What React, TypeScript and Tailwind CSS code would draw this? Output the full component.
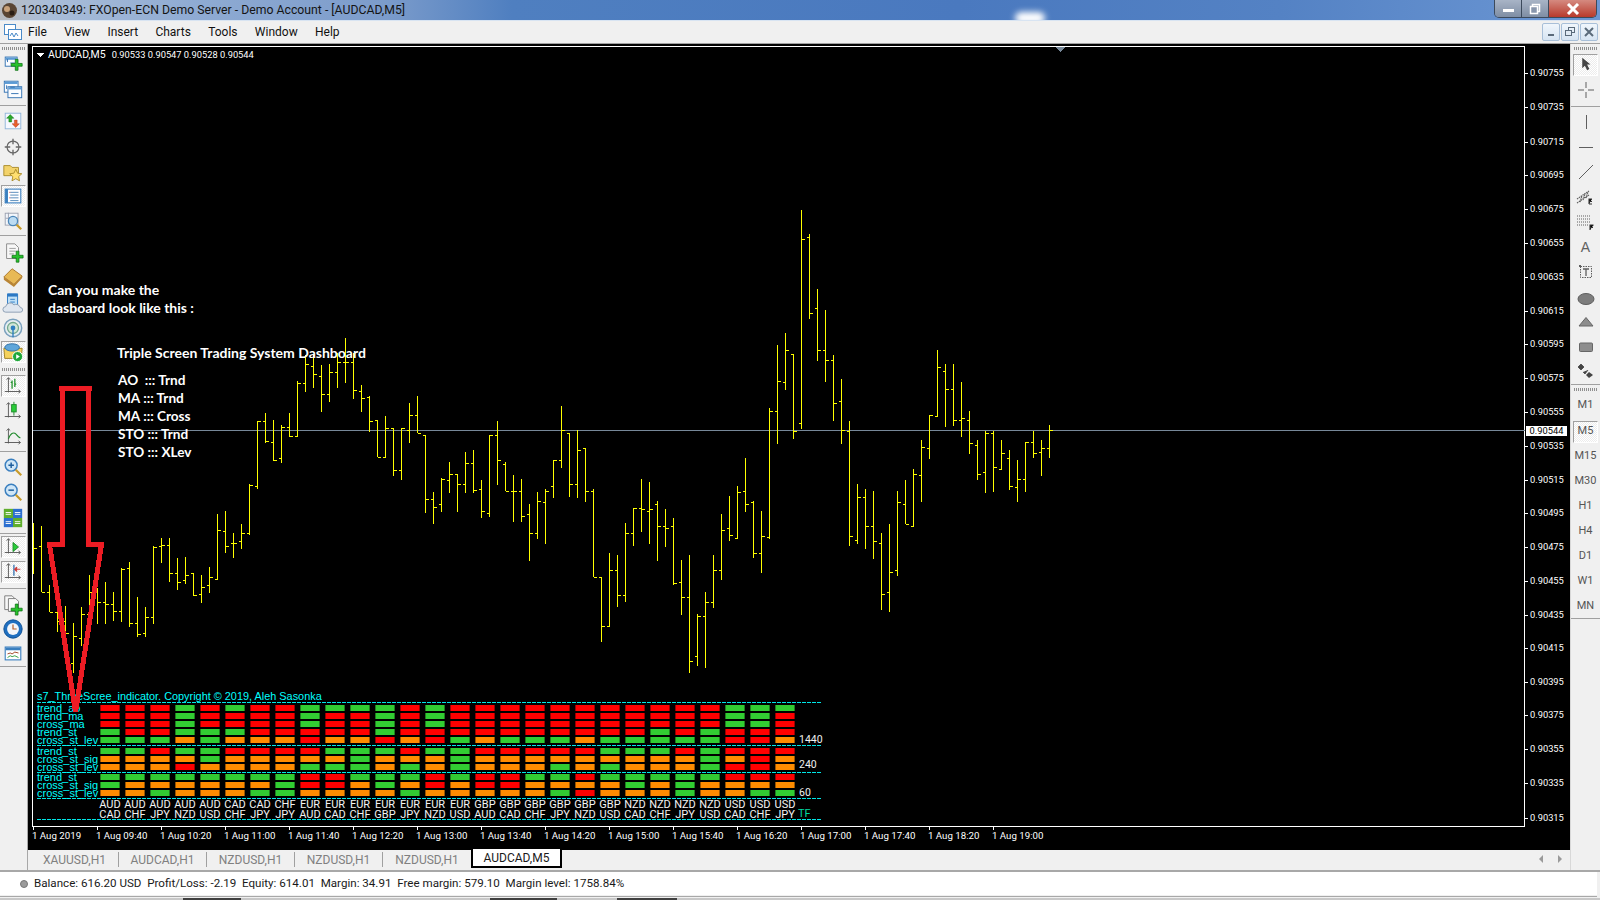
import React from "react";

type B = [number, number, number, number];
// high, low, open, close taken from the picture
const z3: B[] = [[130,282,205,205],[138,337,199,337],[316,397,337,397],[397,455,397,423],[378,470,423,460],[430,578,550,468],[381,497,475,403],[285,420,403,337],[325,433,337,367],[306,433,367,373],[336,424,373,394],[265,425,394,268],[247,440,265,430],[352,470,430,463],[381,470,460,412],[199,431,412,202],[175,248,199,196],[175,307,196,280],[235,329,280,307],[232,313,301,286],[280,347,280,344],[285,368,343,322],[262,338,316,292],[103,300,298,151],[94,218,154,199],[159,233,190,190],[132,206,184,160],[13,166,160,16]];
const z9: B[] = [[363,568,558,363],[340,430,363,424],[360,482,427,480],[376,488,473,380],[340,410,380,408],[243,410,408,248],[165,275,248,193],[165,263,197,222],[195,335,228,283],[193,305,283,217],[160,263,217,187],[113,248,187,185],[160,296,185,270],[255,335,272,295],[288,395,290,363],[360,472,360,472],[348,472,472,385],[385,527,385,510],[385,539,510,385],[310,428,390,345],[288,400,345,398],[406,640,406,598],[576,673,598,620],[533,635,613,537],[486,578,540,521],[521,635,521,552],[456,578,552,488],[450,578,488,570],[540,655,568,633],[406,650,640,406],[363,554,406,481]];
const z10: B[] = [[786,874,793,874],[825,965,874,874],[837,965,874,949],[912,1082,943,1000],[876,1016,1000,904],[867,1031,907,874],[781,893,859,781],[618,803,781,691],[700,890,700,853],[691,893,853,751],[745,905,745,874],[868,1132,874,1132],[1132,1325,1132,1279],[1059,1279,1279,1111],[1065,1220,1111,1186],[969,1205,1186,1000],[925,1037,1000,925],[837,995,925,928],[846,1031,934,928],[903,1082,913,979],[927,1040,979,985],[954,1154,979,1148],[1080,1244,1147,1192],[1065,1418,1192,1384],[1242,1397,1369,1249],[1176,1403,1249,1207],[1065,1223,1205,1111],[942,1139,1111,991],[888,1022,985,1006],[858,1016,1015,877],[774,935,874,913],[904,1073,907,1060],[933,1118,1060,1009],[625,1016,1010,634],[435,731,634,544],[399,569,547,451],[463,716,463,694],[30,686,670,118],[102,356,112,340],[267,482,325,451],[330,545,451,481],[465,662,481,610],[537,731,604,691],[663,1037,694,1009],[852,1031,1021,892],[867,1046,892,979],[873,1076,979,1024],[999,1229,1030,1183],[972,1235,1177,1117],[873,1127,1111,907],[840,973,913,973],[807,979,979,823],[720,905,826,742],[646,776,745,646],[450,649,649,502],[492,680,514,568],[492,677,568,661],[546,710,661,655],[633,761,661,730],[720,839,736,823],[693,878,817,700],[693,875,700,802],[720,808,808,760],[750,869,775,859],[780,905,862,838],[727,875,838,727],[693,773,727,760],[720,827,757,745],[675,773,745,691]];

const bars: B[] = [
  ...z3.map((b) => b.map((v) => 480 + v / 3) as B),
  ...z9.map((b) => b.map((v) => 300 + v / 3) as B),
  ...z10.map((b) => b.map((v) => 200 + v / 3) as B),
];

const barPath = bars
  .map(([h, l, o, c], k) => {
    const x = 33 + 8 * k + 0.5;
    const oy = Math.round(o) + 0.5;
    const cy = Math.round(c) + 0.5;
    return `M${x} ${Math.round(h)}V${Math.round(l)}${k > 0 ? `M${x - 3} ${oy}H${x}` : ""}M${x} ${cy}H${x + 3}`;
  })
  .join("");

const prices: [string, number][] = [
  ["0.90755", 73], ["0.90735", 107], ["0.90715", 142], ["0.90695", 175], ["0.90675", 209], ["0.90655", 243],
  ["0.90635", 277], ["0.90615", 311], ["0.90595", 344], ["0.90575", 378], ["0.90555", 412], ["0.90535", 446],
  ["0.90515", 480], ["0.90495", 513], ["0.90475", 547], ["0.90455", 581], ["0.90435", 615], ["0.90415", 648],
  ["0.90395", 682], ["0.90375", 715], ["0.90355", 749], ["0.90335", 783], ["0.90315", 818],
];
const times = ["1 Aug 2019", "1 Aug 09:40", "1 Aug 10:20", "1 Aug 11:00", "1 Aug 11:40", "1 Aug 12:20", "1 Aug 13:00", "1 Aug 13:40", "1 Aug 14:20", "1 Aug 15:00", "1 Aug 15:40", "1 Aug 16:20", "1 Aug 17:00", "1 Aug 17:40", "1 Aug 18:20", "1 Aug 19:00"];

const pairs = ["AUD CAD", "AUD CHF", "AUD JPY", "AUD NZD", "AUD USD", "CAD CHF", "CAD JPY", "CHF JPY", "EUR AUD", "EUR CAD", "EUR CHF", "EUR GBP", "EUR JPY", "EUR NZD", "EUR USD", "GBP AUD", "GBP CAD", "GBP CHF", "GBP JPY", "GBP NZD", "GBP USD", "NZD CAD", "NZD CHF", "NZD JPY", "NZD USD", "USD CAD", "USD CHF", "USD JPY"];

const cellClass: Record<string, string> = {
  R: "bg-[#ff0000] border-x border-[#990000]",
  G: "bg-[#32cd32] border-x border-[#1f7f1f]",
  O: "bg-[#ff8c00] border-x border-[#995400]",
};

const blocks: { top: string; rows: [string, string][]; tf: string; tfc: string }[] = [
  {
    top: "pt-[2px]",
    tf: "1440",
    tfc: "leading-[6px]",
    rows: [
      ["trend_ao", "RRRGRGRRGGGGRGRRRRRRRRRRRGGG"],
      ["trend_ma", "RRRGRRRRGRRGRGRRRRRRRRRRRGGR"],
      ["cross_ma", "RRRGRRRRGRRGRGRRRRRRRRRRRGGR"],
      ["trend_st", "GRRGGGRRRRRGRRRRRRRRRRGRGRRR"],
      ["cross_st_lev", "GGGOGOOOROORORGOGGGOGGGGGRRO"],
    ],
  },
  {
    top: "pt-[2px]",
    tf: "240",
    tfc: "leading-[2px]",
    rows: [
      ["trend_st", "GGRGGRRRRGGGRGGRRRRRGGGRGRRR"],
      ["cross_st_sig", "OOOOGOOOOOGOOOGOOOOOOOOOGORO"],
      ["cross_st_lev", "OOOROOOOGGGOGOGOOOGOGOOOGRRO"],
    ],
  },
  {
    top: "pt-[1px]",
    tf: "60",
    tfc: "leading-[6px]",
    rows: [
      ["trend_st", "GGGGGGGGRRGGGRGRRGGRGGGGGRRR"],
      ["cross_st_sig", "GOOOOOOGRROGORORROOOOGOGOOOO"],
      ["cross_st_lev", "OOGOOOGGOOOOGOOOOOGROOOGOOGG"],
    ],
  },
];

const Dash = () => (
  <div className="h-px w-[785px] bg-[repeating-linear-gradient(90deg,#00e6e6_0,#00e6e6_4px,transparent_4px,transparent_5px)]" />
);

const Dashboard = () => (
  <div className="absolute left-[9px] top-[658px] w-[790px] font-['Liberation_Sans',sans-serif] text-[11px] leading-[6px] text-[#00ffff]">
    <div className="absolute left-0 top-[-12px] whitespace-nowrap text-[10.9px] leading-[12px]">s7_ThreeScree_indicator. Copyright © 2019, Aleh Sasonka</div>
    {blocks.map((b) => (
      <div key={b.tf}>
        <Dash />
        <div className={b.top}>
          {b.rows.map(([label, cells], i) => (
            <div key={i} className="flex h-[8px]">
              <div className="w-[63px] whitespace-nowrap">{label}</div>
              <div className="flex gap-[5px]">
                {cells.slice(0, 28).split("").map((c, j) => (
                  <div key={j} className={`h-[6px] w-[20px] ${cellClass[c]}`} />
                ))}
              </div>
              {i === b.rows.length - 1 && (
                <div className={`ml-[4px] font-['Roboto',sans-serif] text-[10.5px] text-[#f0f0f0] ${b.tfc}`}>{b.tf}</div>
              )}
            </div>
          ))}
        </div>
      </div>
    ))}
    <Dash />
    <div className="flex h-[20px] pl-[63px] pt-[1px] font-['Roboto',sans-serif] text-[11px] leading-[10px] text-[#f4f4f4]">
      <div className="flex gap-[5px]">
        {pairs.map((p, i) => (
          <div key={i} className="flex w-[20px] flex-col items-center whitespace-nowrap">
            {p.split(" ").map((s) => (
              <div key={s}>{s}</div>
            ))}
          </div>
        ))}
      </div>
      <div className="ml-[3px] self-end text-[#00d8a0]">TF</div>
    </div>
    <Dash />
  </div>
);

/* ------- icons ------- */
const S = ({ children }: { children: React.ReactNode }) => (
  <svg width="22" height="22" viewBox="0 0 24 24" fill="none">{children}</svg>
);
const Plus = ({ x, y }: { x: number; y: number }) => (
  <path d={`M${x - 1.5} ${y - 6}h3v4.5h4.5v3h-4.5v4.5h-3v-4.5h-4.5v-3h4.5z`} fill="#27c22c" stroke="#0d6e12" strokeWidth=".8" />
);
const Win = ({ x, y, w, h }: { x: number; y: number; w: number; h: number }) => (
  <>
    <rect x={x + 0.5} y={y + 0.5} width={w} height={h} fill="#fafcff" stroke="#2f6fb0" />
    <rect x={x + 1} y={y + 1} width={w - 1} height="2.5" fill="#5b9bd5" />
  </>
);
const Axes = () => <path d="M7 3v16M3 18h17M18 16l2 2-2 2M5 5l2-2 2 2" stroke="#555" strokeWidth="1" />;
const Glass = ({ sign }: { sign?: string }) => (
  <>
    <circle cx="10" cy="10" r="6.5" fill="#cfe6f7" stroke="#3a7fbf" strokeWidth="1.6" />
    <path d="M15 15l6 6" stroke="#c79a2a" strokeWidth="2.4" />
    {sign === "+" && <path d="M7 10h6M10 7v6" stroke="#1e5f9e" strokeWidth="1.6" />}
    {sign === "-" && <path d="M7 10h6" stroke="#1e5f9e" strokeWidth="1.6" />}
  </>
);

const leftIcons: Record<string, React.ReactNode> = {
  newChart: (<S><Win x={3} y={5} w={13} h={10} /><path d="M6 11v-3M6 8l-1 1M9 12h5" stroke="#2f6fb0" /><Plus x={16} y={14} /></S>),
  profiles: (<S><Win x={2} y={3} w={15} h={12} /><Win x={6} y={9} w={15} h={12} /><path d="M5 8v4M9 10h5M10 17h8" stroke="#2f6fb0" /></S>),
  market: (<S><rect x="3.5" y="3.5" width="17" height="17" fill="#f6f8ff" stroke="#8fb4d8" /><path d="M9 5l4 4h-2.5v4h-3V9H5z" fill="#2caa2c" stroke="#0d6e12" strokeWidth=".5" /><path d="M15 19l-4-4h2.5v-4h3v4H19z" fill="#e9602a" stroke="#a33" strokeWidth=".5" /></S>),
  nav: (<S><circle cx="12" cy="12" r="6.5" stroke="#666" strokeWidth="1.3" /><path d="M12 3v6M12 15v6M3 12h6M15 12h6" stroke="#666" strokeWidth="1.5" /></S>),
  fav: (<S><path d="M2 5h7l2 2h7v9H2z" fill="#f3d36b" stroke="#a98a2a" /><path d="M15 9l2 4.3 4.6.6-3.4 3.1.9 4.6-4.1-2.3-4.1 2.3.9-4.6-3.4-3.1 4.6-.6z" fill="#ffdf70" stroke="#a98a2a" /></S>),
  term: (<S><rect x="3.5" y="4.5" width="17" height="15" fill="#fff" stroke="#3a7fbf" strokeWidth="1.2" /><rect x="3.5" y="4.5" width="3" height="15" fill="#3a7fbf" /><path d="M9 8h9M9 11h9M9 14h9M9 17h9" stroke="#4f86b8" /><path d="M8 8h1M8 14h1" stroke="#d33" /></S>),
  tester: (<S><rect x="3.5" y="3.5" width="14" height="13" fill="#f2f6fb" stroke="#9a9fae" /><path d="M7 3v12M4 9h13" stroke="#9a9fae" /><circle cx="12" cy="12" r="5" fill="#bcdcf3" stroke="#4a86b8" strokeWidth="1.4" /><path d="M16 16l5 5" stroke="#c79a2a" strokeWidth="2.4" /></S>),
  newOrder: (<S><path d="M5 2h9l4 4v12H5z" fill="#f7f7f7" stroke="#888" /><path d="M8 7h7M8 10h7M8 13h5" stroke="#9a9a9a" /><Plus x={17} y={16} /></S>),
  book: (<S><path d="M2 12l9-9 11 8-9 9z" fill="#e8b955" stroke="#a9742a" /><path d="M2 12v3l11 8 9-10v-2l-9 9z" fill="#b98535" /></S>),
  cloud: (<S><path d="M6 2h11v13H6z" fill="#bfe0f7" stroke="#2b78c4" /><rect x="6" y="2" width="11" height="3" fill="#2b78c4" /><path d="M9 8h5M9 11h5" stroke="#2b78c4" /><path d="M4 22a3 3 0 0 1 0-6 5 5 0 0 1 9-2 5 5 0 0 1 7 3 2.5 2.5 0 0 1 0 5z" fill="#dfe6ef" stroke="#8a9bb0" /></S>),
  signal: (<S><circle cx="12" cy="12" r="9.5" fill="#e6eef2" stroke="#7aa0bd" strokeWidth="1.6" /><circle cx="12" cy="12" r="6" fill="#d3e7d8" stroke="#72a88c" strokeWidth="1.4" /><circle cx="12" cy="12" r="2.6" fill="#2f7ec0" /><path d="M12 13v9" stroke="#2f7ec0" strokeWidth="1.5" /></S>),
  auto: (<S><path d="M2 8h20l-1 11H3z" fill="#f5d25c" stroke="#9c7f23" /><ellipse cx="11" cy="7" rx="8" ry="4" fill="#5fa6da" stroke="#2f6fa5" /><circle cx="17" cy="17" r="5.5" fill="#1fa83a" stroke="#fff" /><path d="M15.5 14.5l4 2.5-4 2.5z" fill="#fff" /></S>),
  bar: (<S><Axes /><path d="M11 6v9M14 4v9M11 8h-1.5M14 10h1.5" stroke="#22932c" strokeWidth="1.4" /></S>),
  candle: (<S><Axes /><path d="M13 2v15" stroke="#1f8a2c" /><rect x="10.5" y="5" width="5" height="8" fill="#29cc38" stroke="#1f8a2c" /></S>),
  line: (<S><Axes /><path d="M7 14c2-6 5-7 7-6s3 4 6 5" stroke="#1f8a2c" strokeWidth="1.3" /></S>),
  zin: (<S><Glass sign="+" /></S>),
  zout: (<S><Glass sign="-" /></S>),
  tile: (<S><rect x="2" y="2" width="10" height="10" fill="#5fae2d" /><rect x="12" y="2" width="10" height="10" fill="#2b6fd0" /><rect x="2" y="12" width="10" height="10" fill="#2b6fd0" /><rect x="12" y="12" width="10" height="10" fill="#5fae2d" /><path d="M4 6h6M4 8h6M14 6h6M14 8h6M4 16h6M4 18h6M14 16h6M14 18h6" stroke="#fff" /></S>),
  scroll: (<S><Axes /><path d="M12 7l6 5-6 5z" fill="#29cc38" stroke="#1f8a2c" /></S>),
  shift: (<S><Axes /><path d="M13 4v12" stroke="#2f6fb0" strokeWidth="1.4" /><path d="M20 9h-4M16 6.5L13.5 9l2.5 2.5z" stroke="#c33" fill="#c33" /></S>),
  ind: (<S><path d="M3 2h8l3 3v12H3z" fill="#f7f7f7" stroke="#777" /><path d="M7 5h8l3 3v11H7z" fill="#fafafa" stroke="#777" /><Plus x={16} y={17} /></S>),
  clock: (<S><circle cx="12" cy="12" r="10" fill="#1f6fc0" stroke="#0e4e90" /><circle cx="12" cy="12" r="6.5" fill="#f3f6fa" /><path d="M12 7v5h4" stroke="#b45f2a" strokeWidth="1.3" /></S>),
  tpl: (<S><rect x="3.5" y="5.5" width="17" height="14" fill="#fff" stroke="#3a7fbf" strokeWidth="1.2" /><rect x="4" y="6" width="16" height="3" fill="#3a7fbf" /><path d="M6 13l3-1 2 1 3-2 4 1" stroke="#9c3d1c" /><path d="M6 17l3-2 2 1 3-1 4 2" stroke="#2c9a3a" /></S>),
};

const G = "#5f5f5f";
const rightIcons: Record<string, React.ReactNode> = {
  cursor: (<svg width="12" height="15" viewBox="0 0 16 20"><path d="M3 1v14l3.5-3.5 3 6 3-1.5-3-6H14z" fill="#454545" /></svg>),
  cross: (<svg width="18" height="18" viewBox="0 0 18 18"><path d="M9 1v6M9 11v6M1 9h6M11 9h6" stroke={G} /></svg>),
  vline: (<svg width="18" height="18" viewBox="0 0 18 18"><path d="M9.5 2v14" stroke={G} /></svg>),
  hline: (<svg width="18" height="18" viewBox="0 0 18 18"><path d="M2 9.5h14" stroke={G} /></svg>),
  trend: (<svg width="18" height="18" viewBox="0 0 18 18"><path d="M2 16L16 2" stroke={G} /></svg>),
  chan: (<svg width="20" height="18" viewBox="0 0 20 18"><path d="M1 11L13 3M1 15L13 7M4 14l2-6M7 12l2-6M10 10l2-6" stroke={G} strokeDasharray="1.5 .7" strokeWidth="1.2" /><path d="M13 16v-5h3M13 13.5h3M13 16h3" stroke="#333" strokeWidth="1.1" /></svg>),
  fibo: (<svg width="20" height="18" viewBox="0 0 20 18"><path d="M1 3h14M1 6h14M1 9h14M1 12h11" stroke={G} strokeDasharray="1 1" /><path d="M14 17v-5h3.5M14 14.5h3" stroke="#333" strokeWidth="1.1" /></svg>),
  tbox: (<svg width="18" height="18" viewBox="0 0 18 18"><rect x="3.5" y="3.5" width="11" height="11" fill="none" stroke={G} strokeDasharray="1.5 1" /><path d="M6 6h6M9 6v7" stroke={G} strokeWidth="1.3" /><rect x="2" y="2" width="2" height="2" fill={G} /></svg>),
  ell: (<svg width="18" height="14" viewBox="0 0 18 14"><ellipse cx="9" cy="7" rx="8" ry="5.5" fill="#7d7d7d" stroke="#5f5f5f" /></svg>),
  tri: (<svg width="18" height="12" viewBox="0 0 18 12"><path d="M9 1.5L16 10H2z" fill="#8d8d8d" stroke="#666" /></svg>),
  rect: (<svg width="18" height="12" viewBox="0 0 18 12"><rect x="2.5" y="2" width="13" height="8.5" rx="1" fill="#8d8d8d" stroke="#666" /></svg>),
  arrows: (<svg width="20" height="18" viewBox="0 0 20 18"><path d="M5 1l3 3-3 3-3-3zM7 9l2 2 3-4" stroke="#444" fill="#444" strokeWidth=".8" /><path d="M13 9l4 3-4 3-3-3z" fill="#444" /></svg>),
};

const Grip = ({ w = "w-[23px]" }: { w?: string }) => (
  <div className={`h-[3px] ${w} bg-[repeating-linear-gradient(90deg,#8f8f8f_0,#8f8f8f_1px,transparent_1px,transparent_2px)]`} />
);

const Slot = ({ h, children, active }: { h: string; children?: React.ReactNode; active?: boolean }) => (
  <div className={`flex shrink-0 items-center justify-center ${h}`}>
    {active ? (
      <div className="flex h-[22px] w-[25px] items-center justify-center border border-b-white border-r-white border-l-[#a0a0a0] border-t-[#a0a0a0] bg-[repeating-conic-gradient(#ffffff_0_25%,#ececec_0_50%)] bg-[length:2px_2px]">{children}</div>
    ) : (
      children
    )}
  </div>
);
const Sep = ({ h, pos = "items-center" }: { h: string; pos?: string }) => (
  <div className={`flex shrink-0 ${h} ${pos} justify-center`}>
    <div className="h-px w-full bg-[#a0a0a0]" />
  </div>
);

const LeftBar = () => (
  <div className="flex h-full w-[28px] shrink-0 flex-col border-r border-[#a8a8a8] bg-[#f0f0f0] pr-[1px]">
    <div className="flex h-[6px] shrink-0 items-end justify-center"><Grip /></div>
    <Slot h="h-[26px]">{leftIcons.newChart}</Slot>
    <Slot h="h-[26px]">{leftIcons.profiles}</Slot>
    <Sep h="h-[6px]" />
    <Slot h="h-[26px]">{leftIcons.market}</Slot>
    <Slot h="h-[26px]">{leftIcons.nav}</Slot>
    <Slot h="h-[24px]">{leftIcons.fav}</Slot>
    <Slot h="h-[23px]" active>{leftIcons.term}</Slot>
    <Slot h="h-[28px]">{leftIcons.tester}</Slot>
    <Sep h="h-[6px]" pos="items-start" />
    <Slot h="h-[24px]">{leftIcons.newOrder}</Slot>
    <Slot h="h-[24px]">{leftIcons.book}</Slot>
    <Slot h="h-[28px]">{leftIcons.cloud}</Slot>
    <Slot h="h-[22px]">{leftIcons.signal}</Slot>
    <Slot h="h-[25px]" active>{leftIcons.auto}</Slot>
    <div className="flex h-[10px] shrink-0 items-center justify-center"><Grip /></div>
    <Slot h="h-[23px]" active>{leftIcons.bar}</Slot>
    <Slot h="h-[28px]">{leftIcons.candle}</Slot>
    <Slot h="h-[24px]">{leftIcons.line}</Slot>
    <Sep h="h-[4px]" />
    <Slot h="h-[27px]">{leftIcons.zin}</Slot>
    <Slot h="h-[24px]">{leftIcons.zout}</Slot>
    <Slot h="h-[28px]">{leftIcons.tile}</Slot>
    <Sep h="h-[3px]" />
    <Slot h="h-[24px]" active>{leftIcons.scroll}</Slot>
    <Slot h="h-[25px]" active>{leftIcons.shift}</Slot>
    <Sep h="h-[8px]" />
    <Slot h="h-[26px]">{leftIcons.ind}</Slot>
    <Slot h="h-[22px]">{leftIcons.clock}</Slot>
    <Slot h="h-[25px]">{leftIcons.tpl}</Slot>
    <Sep h="h-[3px]" />
  </div>
);

const P = ({ t, h, active }: { t: string; h: string; active?: boolean }) => (
  <Slot h={h} active={active}>
    <span className="font-['Roboto',sans-serif] text-[11px] text-[#555]">{t}</span>
  </Slot>
);

const RightBar = () => (
  <div className="flex h-full w-[30px] shrink-0 flex-col bg-[#f0f0f0] border-l border-[#d8d8d8]">
    <div className="flex h-[6px] shrink-0 items-end justify-center"><Grip /></div>
    <div className="h-[3px] shrink-0" />
    <Slot h="h-[23px]" active>{rightIcons.cursor}</Slot>
    <Slot h="h-[28px]">{rightIcons.cross}</Slot>
    <Sep h="h-[4px]" />
    <Slot h="h-[28px]">{rightIcons.vline}</Slot>
    <Slot h="h-[22px]">{rightIcons.hline}</Slot>
    <Slot h="h-[28px]">{rightIcons.trend}</Slot>
    <Slot h="h-[22px]">{rightIcons.chan}</Slot>
    <Slot h="h-[28px]">{rightIcons.fibo}</Slot>
    <Slot h="h-[22px]"><span className="font-['Liberation_Sans',sans-serif] text-[14px] text-[#606060]">A</span></Slot>
    <Slot h="h-[28px]">{rightIcons.tbox}</Slot>
    <Slot h="h-[26px]">{rightIcons.ell}</Slot>
    <Slot h="h-[20px]">{rightIcons.tri}</Slot>
    <Slot h="h-[30px]">{rightIcons.rect}</Slot>
    <Slot h="h-[20px]">{rightIcons.arrows}</Slot>
    <Sep h="h-[4px]" />
    <div className="flex h-[6px] shrink-0 items-center justify-center"><Grip /></div>
    <P t="M1" h="h-[27px]" />
    <P t="M5" h="h-[25px]" active />
    <P t="M15" h="h-[25px]" />
    <P t="M30" h="h-[25px]" />
    <P t="H1" h="h-[25px]" />
    <P t="H4" h="h-[25px]" />
    <P t="D1" h="h-[25px]" />
    <P t="W1" h="h-[25px]" />
    <P t="MN" h="h-[24px]" />
    <Sep h="h-px" />
  </div>
);

const Chart = () => (
  <div className="relative h-[804px] w-full overflow-hidden bg-black font-['Roboto',sans-serif]">
    <svg className="absolute left-0 top-0" width="1542" height="804" viewBox="28 44 1542 804" shapeRendering="crispEdges">
      <rect x="32.5" y="46.5" width="1492" height="780" fill="none" stroke="#fff" />
      <path d="M33 430.5H1525" stroke="#778899" />
      <path d={barPath} stroke="#ffff00" fill="none" />
      <path d={prices.map(([, y]) => `M1525 ${y + 0.5}h3`).join("")} stroke="#fff" />
      <path d={times.map((_, i) => `M${33.5 + 64 * i} 827v3`).join("")} stroke="#fff" />
      <path d="M36 53h8l-4 4z" fill="#fff" />
      <path d="M1056 47h9l-4.5 5z" fill="#778899" />
    </svg>

    <div className="absolute left-[20px] top-[4px] whitespace-nowrap text-[9.3px] leading-[13px] text-white">
      <span className="mr-[6px] text-[10.5px]">AUDCAD,M5</span>0.90533 0.90547 0.90528 0.90544
    </div>

    {prices.map(([p, y]) => (
      <div key={p} className="absolute left-[1502px] text-[9.3px] leading-[12px] text-white" style={{ top: y - 50 }}>{p}</div>
    ))}
    <div className="absolute left-[1498px] top-[382px] flex h-[10px] w-[41px] items-center justify-center bg-white text-[9.3px] text-black">0.90544</div>
    {times.map((t, i) => (
      <div key={t} className="absolute top-[786px] whitespace-nowrap text-[9.7px] leading-[12px] text-white" style={{ left: 4 + 64 * i }}>{t}</div>
    ))}

    <Dashboard />

    <div className="absolute left-[20px] top-[237px] font-['Lato',sans-serif] text-[14px] font-bold leading-[18px] text-white">
      <div>Can you make the</div>
      <div>dasboard look like this :</div>
    </div>
    <div className="absolute left-[89px] top-[300px] whitespace-nowrap font-['Lato',sans-serif] text-[14px] font-bold leading-[18px] text-white">Triple Screen Trading System Dashboard</div>
    <div className="absolute left-[90px] top-[327px] whitespace-pre font-['Lato',sans-serif] text-[13.6px] font-bold leading-[18px] text-white">
      <div>AO  ::: Trnd</div>
      <div>MA ::: Trnd</div>
      <div>MA ::: Cross</div>
      <div>STO ::: Trnd</div>
      <div>STO ::: XLev</div>
    </div>

    <svg className="absolute left-0 top-0" width="1542" height="804" viewBox="28 44 1542 804" shapeRendering="crispEdges">
      <path d="M59 388.5H92M62 388.5V544.5H49.5L75.5 712 101.5 544.5H88.5V388.5" fill="none" stroke="#ed1c24" strokeWidth="5" />
    </svg>
  </div>
);

const tabs = ["XAUUSD,H1", "AUDCAD,H1", "NZDUSD,H1", "NZDUSD,H1", "NZDUSD,H1"];

const TabBar = () => (
  <div className="flex h-[20px] items-start border-t-2 border-black bg-[#f0f0f0] font-['Roboto',sans-serif] text-[12px] leading-[18px]">
    <div className="w-[3px]" />
    {tabs.map((t, i) => (
      <div key={i} className={`mt-[2px] flex h-[15px] w-[88px] items-center justify-center text-[#808080] ${i < 4 ? "border-r border-[#a0a0a0]" : ""}`}>{t}</div>
    ))}
    <div className="-mt-[1px] flex h-[19px] w-[91px] items-center justify-center border-x-2 border-b-2 border-black bg-white text-[#1a1a1a]">AUDCAD,M5</div>
    <div className="ml-auto flex h-[18px] items-center gap-[15px] pr-[8px]">
      <svg width="4" height="8"><path d="M4 0v8L0 4z" fill="#9a9a9a" /></svg>
      <svg width="4" height="8"><path d="M0 0v8l4-4z" fill="#9a9a9a" /></svg>
    </div>
  </div>
);

const StatusBar = () => (
  <div className="h-[28px] shrink-0 border-t-2 border-[#a8a8a8] bg-[#f0f0f0] pr-[3px]">
    <div className="flex h-[23px] items-center gap-[6px] bg-white pl-[20px] font-['Roboto',sans-serif] text-[11.6px] text-[#1a1a1a] whitespace-pre">
      <div className="h-[8px] w-[8px] rounded-full border border-[#777] bg-[#9b9b9b]" />
      <span>Balance: 616.20 USD  Profit/Loss: -2.19  Equity: 614.01  Margin: 34.91  Free margin: 579.10  Margin level: 1758.84%</span>
    </div>
    <div className="mt-[1px] h-px bg-[#a8a8a8]" />
  </div>
);

const WinBtn = ({ c, w, children }: { c: string; w: string; children: React.ReactNode }) => (
  <div className={`flex h-full items-center justify-center ${w} ${c}`}>{children}</div>
);

const TitleBar = () => (
  <div className="relative flex h-[21px] shrink-0 items-center overflow-hidden border-b border-[#d8e4f2] bg-[linear-gradient(90deg,#b9bcc0_0,#a9bdd8_3%,#8fabd3_12%,#7c9ccb_24%,#4f7fc0_32%,#4a79bf_60%,#5482c4_80%,#6c97d4_100%)] pl-[1px]">
    <div className="absolute left-[1015px] top-[12px] h-[12px] w-[30px] rounded-full bg-white blur-[3px]" />
    <svg width="17" height="17" viewBox="0 0 17 17" className="shrink-0">
      <circle cx="8.5" cy="8.5" r="7.5" fill="#5a4634" />
      <circle cx="6" cy="7" r="3" fill="#c9a27a" />
      <circle cx="11" cy="11" r="2.5" fill="#2a1e14" />
    </svg>
    <div className="relative ml-[3px] whitespace-nowrap font-['Roboto',sans-serif] text-[12.25px] text-[#141414]">120340349: FXOpen-ECN Demo Server - Demo Account - [AUDCAD,M5]</div>
    <div className="relative ml-auto mr-[3px] flex h-[18px] self-start overflow-hidden rounded-b-[5px] border border-t-0 border-[#3c4a5c]">
      <WinBtn w="w-[27px]" c="bg-[linear-gradient(#a8b4c6,#7f8ea4)] border-r border-[#3c4a5c]">
        <div className="mt-[3px] h-[3px] w-[11px] bg-white" />
      </WinBtn>
      <WinBtn w="w-[27px]" c="bg-[linear-gradient(#a8b4c6,#7f8ea4)] border-r border-[#3c4a5c]">
        <svg width="12" height="12"><rect x="3.5" y="1.5" width="7" height="7" fill="none" stroke="#fff" strokeWidth="1.5" /><rect x="1.5" y="3.5" width="7" height="7" fill="#8896ac" stroke="#fff" strokeWidth="1.5" /></svg>
      </WinBtn>
      <WinBtn w="w-[47px]" c="bg-[linear-gradient(#d58a80,#b83a2c)]">
        <svg width="14" height="12"><path d="M2 1l10 10M12 1L2 11" stroke="#fff" strokeWidth="3" /></svg>
      </WinBtn>
    </div>
  </div>
);

const Mdi = ({ children }: { children: React.ReactNode }) => (
  <div className="flex h-[18px] w-[18px] items-center justify-center rounded-[2px] border border-[#a8bfd8] bg-[linear-gradient(#f0f6fc,#d6e4f2)]">{children}</div>
);

const menus = ["File", "View", "Insert", "Charts", "Tools", "Window", "Help"];

const MenuBar = () => (
  <div className="flex h-[22px] shrink-0 items-center bg-[#f0f0f0] pl-[3px] pr-[2px]">
    <svg width="20" height="20" viewBox="0 0 20 20" className="shrink-0">
      <rect x="1.5" y="2.5" width="11" height="10" fill="#fff" stroke="#4a8ac8" />
      <rect x="5.5" y="7.5" width="13" height="10" fill="#fff" stroke="#4a8ac8" />
      <path d="M7 14l2-3 2 4 2-4 2 3" stroke="#4a8ac8" fill="none" />
    </svg>
    <div className="ml-[5px] flex gap-[17.3px] font-['Roboto',sans-serif] text-[12px] text-[#111]">
      {menus.map((m) => (
        <span key={m}>{m}</span>
      ))}
    </div>
    <div className="ml-auto flex gap-px">
      <Mdi><div className="mt-[6px] h-[2px] w-[6px] bg-[#5a6a7a]" /></Mdi>
      <Mdi><svg width="10" height="10"><rect x="3.5" y=".5" width="6" height="5" fill="none" stroke="#5a6a7a" /><rect x=".5" y="3.5" width="6" height="5" fill="#e0eaf4" stroke="#5a6a7a" /></svg></Mdi>
      <Mdi><svg width="10" height="10"><path d="M1 1l8 8M9 1L1 9" stroke="#5a6a7a" strokeWidth="2" /></svg></Mdi>
    </div>
  </div>
);

export default function App() {
  return (
    <div className="flex h-[900px] w-[1600px] flex-col overflow-hidden bg-[#f0f0f0]">
      <TitleBar />
      <MenuBar />
      <div className="flex h-[827px] shrink-0 border-t border-[#a0a0a0]">
        <LeftBar />
        <div className="flex w-[1542px] shrink-0 flex-col">
          <Chart />
          <TabBar />
        </div>
        <RightBar />
      </div>
      <StatusBar />
      <div className="flex h-[2px] shrink-0 bg-[#c8c8c8]">
        <div className="w-[183px]" />
        <div className="w-[58px] bg-[#404040]" />
        <div className="w-[249px]" />
        <div className="w-[67px] bg-[#404040]" />
        <div className="w-[60px]" />
        <div className="w-[60px] bg-[#404040]" />
      </div>
    </div>
  );
}
